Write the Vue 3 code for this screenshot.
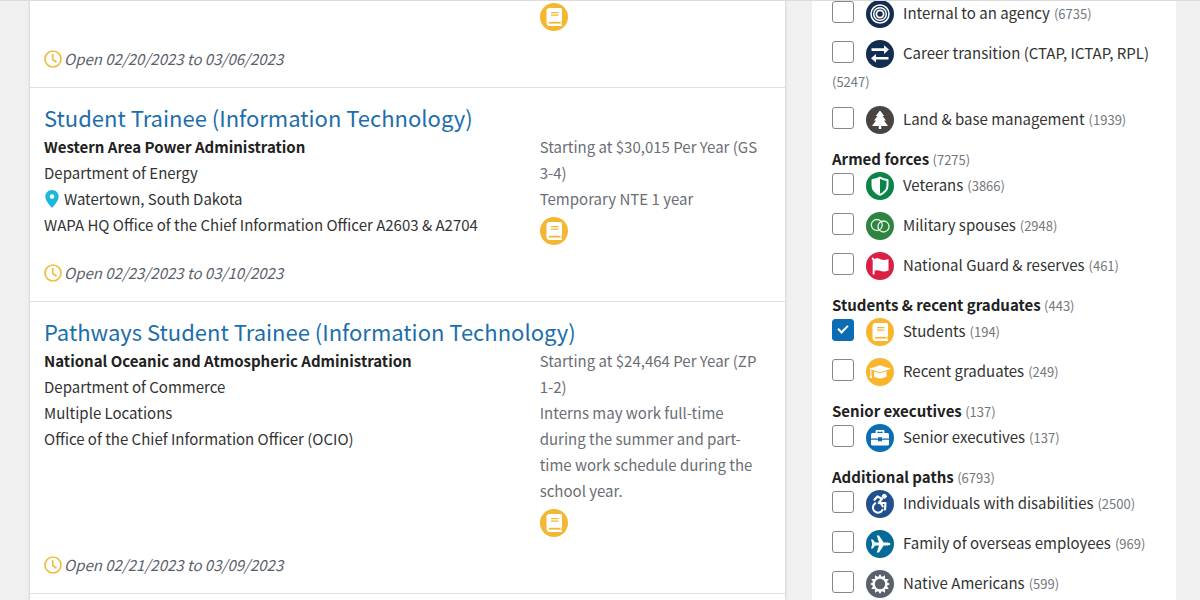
<script setup>
import { ref } from 'vue'

const jobs = [
  { pay: [], dates: 'Open 02/20/2023 to 03/06/2023' },
  {
    title: 'Student Trainee (Information Technology)',
    agency: 'Western Area Power Administration',
    department: 'Department of Energy',
    location: 'Watertown, South Dakota',
    pin: true,
    office: 'WAPA HQ Office of the Chief Information Officer A2603 & A2704',
    pay: ['Starting at $30,015 Per Year (GS 3-4)', 'Temporary NTE 1 year'],
    dates: 'Open 02/23/2023 to 03/10/2023',
  },
  {
    title: 'Pathways Student Trainee (Information Technology)',
    agency: 'National Oceanic and Atmospheric Administration',
    department: 'Department of Commerce',
    location: 'Multiple Locations',
    office: 'Office of the Chief Information Officer (OCIO)',
    pay: [
      'Starting at $24,464 Per Year (ZP 1-2)',
      'Interns may work full-time during the summer and part-time work schedule during the school year.',
    ],
    dates: 'Open 02/21/2023 to 03/09/2023',
  },
]

const groups = ref([
  {
    rows: [
      { id: 'internal', label: 'Internal to an agency', count: 6735, color: '#112e51' },
      { id: 'transition', label: 'Career transition (CTAP, ICTAP, RPL)', count: 5247, color: '#112e51' },
      { id: 'land', label: 'Land & base management', count: 1939, color: '#494440' },
    ],
  },
  {
    title: 'Armed forces',
    count: 7275,
    rows: [
      { id: 'veterans', label: 'Veterans', count: 3866, color: '#0a8448' },
      { id: 'spouses', label: 'Military spouses', count: 2948, color: '#2e8540' },
      { id: 'guard', label: 'National Guard & reserves', count: 461, color: '#dc1f44' },
    ],
  },
  {
    title: 'Students & recent graduates',
    count: 443,
    rows: [
      { id: 'students', label: 'Students', count: 194, color: '#f9b52c', checked: true },
      { id: 'graduates', label: 'Recent graduates', count: 249, color: '#f9b52c' },
    ],
  },
  {
    title: 'Senior executives',
    count: 137,
    rows: [{ id: 'executives', label: 'Senior executives', count: 137, color: '#0b6eb4' }],
  },
  {
    title: 'Additional paths',
    count: 6793,
    rows: [
      { id: 'disabilities', label: 'Individuals with disabilities', count: 2500, color: '#20508f' },
      { id: 'family', label: 'Family of overseas employees', count: 969, color: '#046b99' },
      { id: 'native', label: 'Native Americans', count: 599, color: '#5b616b' },
    ],
  },
])
</script>

<template>
  <div class="page">
    <main class="results">
      <article v-for="(job, i) in jobs" :key="i" class="job" :class="{ partial: !job.title }">
        <h2 v-if="job.title" class="title"><a href="#">{{ job.title }}</a></h2>
        <div class="columns">
          <div class="main">
            <template v-if="job.title">
              <h3 class="agency">{{ job.agency }}</h3>
              <p>{{ job.department }}</p>
              <p class="place">
                <svg v-if="job.pin" class="pin" viewBox="0 0 16 20" aria-hidden="true">
                  <path fill="#1bb8dc" fill-rule="evenodd" d="M8 1C4.200 1 1.300 3.900 1.300 7.600C1.300 12.200 8 19 8 19S14.700 12.200 14.700 7.600C14.700 3.900 11.800 1 8 1ZM8 5.200A2.300 2.300 0 1 1 8 9.800A2.300 2.300 0 1 1 8 5.200Z" />
                </svg>
                <span>{{ job.location }}</span>
              </p>
              <p>{{ job.office }}</p>
            </template>
          </div>
          <div class="pay">
            <p v-for="line in job.pay" :key="line">{{ line }}</p>
            <svg class="badge" viewBox="0 0 28 28" role="img" aria-label="Students">
              <circle cx="14" cy="14" r="14" fill="#f4b733" />
              <path fill="#fff" d="M9.500 5H20.500Q22 5 22 6.500V17.500Q22 18.200 21.500 18.500V21.500Q22 22 22 22.400Q22 23 21.200 23H9Q6.500 22.500 6.500 20V8Q6.500 5 9.500 5Z" />
              <path stroke="#f4b733" stroke-width="1.300" d="M11 9.700H18.500M11 12.200H18.500" />
              <path stroke="#f4b733" stroke-width="1.800" d="M9 19.700H20.500" />
            </svg>
          </div>
        </div>
        <p class="dates">
          <svg class="clock" viewBox="0 0 18 18" fill="none" stroke="#f0bd42" aria-hidden="true">
            <circle cx="9" cy="9" r="8" stroke-width="1.700" />
            <path stroke-width="1.700" d="M8.700 4V9.500L12.500 12.200" />
          </svg>
          <span>{{ job.dates }}</span>
        </p>
      </article>
    </main>

    <aside class="filters">
      <section v-for="(group, g) in groups" :key="g">
        <h4 v-if="group.title">{{ group.title }} <small>({{ group.count }})</small></h4>
        <div v-for="row in group.rows" :key="row.id" class="row">
          <input :id="row.id" v-model="row.checked" type="checkbox" />
          <svg class="icon" viewBox="0 0 28 28" fill="none" stroke="none" aria-hidden="true">
            <circle cx="14" cy="14" r="14" :fill="row.color" />
            <g v-if="row.id === 'internal'" stroke="#fff" stroke-width="1.500">
              <circle cx="14" cy="14" r="9" />
              <circle cx="14" cy="14" r="6.300" />
              <circle cx="14" cy="14" r="3.600" stroke-width="1.800" />
            </g>
            <path v-else-if="row.id === 'transition'" fill="#fff" d="M5.500 8.300H18V5.300L23 9.600L18 13.900V10.900H5.500ZM22.500 17H10V14L5 18.300L10 22.600V19.600H22.500Z" />
            <path v-else-if="row.id === 'land'" fill="#fff" d="M14 4.500L18.200 10H16.500L20 14.500H18L22 20H15.200V23H12.800V20H6L10 14.500H8L11.500 10H9.800Z" />
            <g v-else-if="row.id === 'veterans'">
              <path stroke="#fff" stroke-width="2" stroke-linejoin="round" d="M14 5.700Q17.500 8 21.500 8V13.500C21.500 18 18 21 14 22.800C10 21 6.500 18 6.500 13.500V8Q10.500 8 14 5.700Z" />
              <path fill="#fff" d="M14 5.700V22.800C10 21 6.500 18 6.500 13.500V8Q10.500 8 14 5.700Z" />
              <path :fill="row.color" d="M14.500 8Q17 9.200 20 9.600V13.500Q19.600 17.500 14.500 20.800Z" />
            </g>
            <g v-else-if="row.id === 'spouses'" stroke="#e8f4e9" stroke-width="1.300">
              <circle cx="10.800" cy="13" r="5.500" />
              <circle cx="17.500" cy="14.500" r="5.500" />
            </g>
            <path v-else-if="row.id === 'guard'" fill="#fff" d="M6 5.500Q7.700 5 8 7C11 5.800 12.500 6.500 15 7.500Q18 8.500 22.500 7V18.500Q18.500 20.300 15 19Q11.500 17.500 8.500 18.700V22.500H6.700V8Q5 7 6 5.500Z" />
            <g v-else-if="row.id === 'students'">
              <path fill="#fff" d="M9.500 5H20.500Q22 5 22 6.500V17.500Q22 18.200 21.500 18.500V21.500Q22 22 22 22.400Q22 23 21.200 23H9Q6.500 22.500 6.500 20V8Q6.500 5 9.500 5Z" />
              <path :stroke="row.color" stroke-width="1.200" d="M11 9.700H18.500M11 12.200H18.500" />
              <path :stroke="row.color" stroke-width="1.700" d="M9 19.700H20.500" />
            </g>
            <g v-else-if="row.id === 'graduates'">
              <path fill="#fff" d="M14 7.200L25 10.700L14 14.500L3 10.700Z" />
              <path fill="#fff" d="M8 13.500L14 15.600L20.500 13.300V18.500Q14 22.500 8 18.500Z" />
              <path stroke="#fff" stroke-width="1.200" d="M4.800 11.500V16.500" />
              <path fill="#fff" d="M4.800 15L6.200 20H3.700Z" />
            </g>
            <g v-else-if="row.id === 'executives'">
              <path stroke="#fff" stroke-width="1.700" d="M10.500 10V6.800H17.500V10" />
              <path fill="#fff" d="M6.500 9H21.500Q23 9 23 10.500V14.500H16V13.300H12V14.500H5V10.500Q5 9 6.500 9ZM5 15.800H12V17.200H16V15.800H23V20Q23 21.500 21.500 21.500H6.500Q5 21.500 5 20Z" />
            </g>
            <g v-else-if="row.id === 'disabilities'" stroke="#fff" stroke-linecap="round" stroke-linejoin="round">
              <circle cx="18.300" cy="6.300" r="2" fill="#fff" />
              <path stroke-width="2.200" d="M8.500 9.800L11.500 6.500L16 8.800L12.800 13H19.500L19 19.500" />
              <path stroke-width="2" d="M9.200 13.300A5.100 5.100 0 1 0 16.500 20" />
              <path stroke-width="2" d="M13 12.700A5.200 5.200 0 0 1 16.700 16.500" />
            </g>
            <path v-else-if="row.id === 'family'" fill="#fff" d="M5 9.500H6.700L9.300 12.500H13L10.800 5.500H13L17.700 12.500H21.500Q24.500 12.700 24.500 14Q24.500 15.300 21.500 15.500H17.700L13 22.500H10.800L13 15.500H9.300L6.700 18.500H5L6.300 14Z" />
            <g v-else>
              <circle cx="14" cy="14" r="6.300" stroke="#fff" stroke-width="2.200" />
              <path v-for="a in 12" :key="a" fill="#fff" d="M11.900 7.500L14 4L16.100 7.500Z" :transform="`rotate(${a * 30} 14 14)`" />
            </g>
          </svg>
          <label :for="row.id">{{ row.label }}</label>
          <small>({{ row.count }})</small>
        </div>
      </section>
    </aside>
  </div>
</template>

<style>
body {
  background: #f0f0f0;
}
</style>

<style scoped>
.page {
  position: relative;
  display: grid;
  grid-template-columns: minmax(0, 755fr) minmax(0, 364fr);
  gap: 27px;
  box-sizing: border-box;
  min-height: 100vh;
  padding: 0 24px 0 30px;
  font: 15px/26px "Noto Sans CJK SC", "Noto Sans", sans-serif;
  color: #333;
}
.page::before {
  content: "";
  position: absolute;
  inset: 0 0 auto;
  z-index: 1;
  height: 1px;
  background: #dcdcdc;
}
h2,
h3,
h4,
p {
  margin: 0;
  font-size: inherit;
}
.results {
  background: #fff;
  box-shadow: 0 0 2px 1px #d6d6d6;
}
.job {
  padding: 15px 15px 15px 14px;
  border-bottom: 1px solid #e1e1e1;
}
.partial {
  padding-top: 0;
}
.title {
  margin-bottom: 2px;
  font-size: 22px;
  font-weight: 400;
  line-height: 29px;
}
.title a {
  color: #1c6eab;
  text-decoration: none;
}
.columns {
  display: grid;
  grid-template-columns: minmax(0, 495fr) minmax(0, 230fr);
  margin-bottom: 15px;
}
.agency {
  font-weight: 700;
  color: #212121;
}
.place,
.dates {
  display: flex;
  align-items: center;
}
.pin {
  width: 16px;
  height: 20px;
  margin-right: 4px;
}
.pay {
  color: #6b6e74;
}
.badge {
  display: block;
  width: 28px;
  height: 28px;
  margin-top: 5px;
}
.partial .badge {
  margin-top: 3px;
}
.dates {
  font-style: italic;
  color: #5b616b;
}
.clock {
  width: 18px;
  height: 18px;
  margin-right: 2px;
}
.filters {
  padding: 0 20px;
  background: #fff;
}
h4 {
  font-weight: 700;
  color: #212121;
}
small {
  font-size: 13px;
  font-weight: 400;
  line-height: 20px;
  color: #74777d;
}
.row {
  display: flex;
  flex-wrap: wrap;
  align-items: flex-start;
  margin-bottom: 12px;
}
section:last-child .row:last-child {
  margin-bottom: 0;
}
.row small {
  padding-top: 2px;
  line-height: 24px;
}
.row label {
  margin-right: 4px;
}
.icon {
  width: 28px;
  height: 28px;
  margin: 0 9px 0 12px;
}
input {
  appearance: none;
  box-sizing: border-box;
  width: 22px;
  height: 22px;
  margin: 1px 0 0;
  border: 1px solid #85888d;
  border-radius: 3px;
  background: #fff;
}
input:checked {
  display: grid;
  place-items: center;
  border-color: #0b6eb4;
  background: #0b6eb4;
}
input:checked::before {
  content: "";
  width: 8px;
  height: 4px;
  margin-bottom: 4px;
  border: solid #fff;
  border-width: 0 0 2px 2px;
  transform: rotate(-45deg);
}
</style>
